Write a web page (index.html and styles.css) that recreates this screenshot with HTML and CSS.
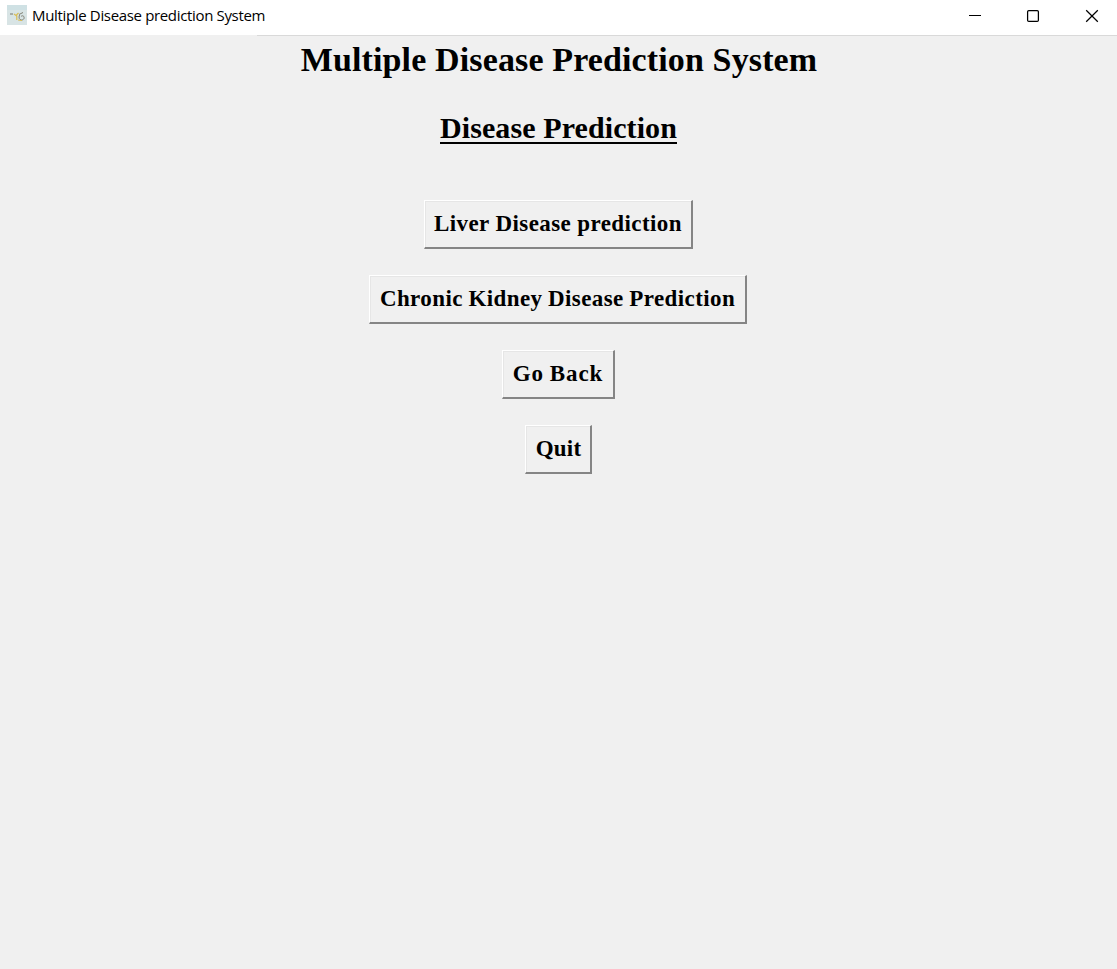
FILE: index.html
```html
<!DOCTYPE html>
<html lang="en">
<head>
<meta charset="utf-8">
<title>Multiple Disease prediction System</title>
<link rel="stylesheet" href="styles.css">
</head>
<body>
<header class="titlebar">
  <svg class="app-icon" width="20" height="20" viewBox="0 0 20 20" fill="none">
    <rect width="20" height="20" fill="#d8e4e5"/>
    <path d="M0 0h20v5H0z" fill="#cfe1e4"/>
    <path d="M3 9h3" stroke="#77766a"/>
    <path d="M7 9l2 1.500L11.500 8M9.800 10.500v4.500" stroke="#d9bd55" stroke-width="1.200"/>
    <path d="M12 9.500l4-2M12.500 10c-2 5 3 6.500 4.500 3.500 .6-2.500-1.500-3.500-3-2" stroke="#77766a" stroke-width=".9"/>
    <path d="M11 15l4 .6" stroke="#d9bd55"/>
  </svg>
  <span class="window-title">Multiple Disease prediction System</span>
  <svg class="controls" width="132" height="14" viewBox="0 0 132 14" fill="none" stroke="#000" stroke-width="1.250">
    <path d="M2 6.500h12" stroke-width="1"/>
    <rect x="60.600" y="1.600" width="10.800" height="10.800" rx="1.200"/>
    <path d="M119.200 1.200l11.600 11.600M130.800 1.200l-11.600 11.600"/>
  </svg>
</header>
<main class="content">
  <h1 class="heading">Multiple Disease Prediction System</h1>
  <h2 class="subheading">Disease Prediction</h2>
  <div class="actions">
    <button class="action liver">Liver Disease prediction</button>
    <button class="action kidney">Chronic Kidney Disease Prediction</button>
    <button class="action back">Go Back</button>
    <button class="action quit">Quit</button>
  </div>
</main>
</body>
</html>
```
FILE: styles.css
```css
* { box-sizing: border-box; }
body {
  margin: 0;
  height: 100vh;
  display: flex;
  flex-direction: column;
  overflow: hidden;
  background: #f0f0f0;
  color: #000;
  font-family: "Liberation Serif", serif;
}
.titlebar {
  height: 36px;
  flex: none;
  display: flex;
  align-items: center;
  padding: 0 18px 6px 7px;
  background:
    linear-gradient(to right, #f0f0f0 257px, #d9d9d9 257px) bottom / 100% 1px no-repeat,
    #fff;
}
.app-icon { flex: none; }
.window-title {
  margin-left: 5px;
  font: 15px/20px "Open Sans", "Noto Sans", sans-serif;
  letter-spacing: -0.34px;
  white-space: nowrap;
}
.controls {
  margin: 2px 0 0 auto;
}
.content {
  display: flex;
  flex-direction: column;
  align-items: center;
  white-space: nowrap;
}
.heading {
  margin: 3px 0 0;
  padding-left: 1px;
  font-size: 34px;
  line-height: 41px;
  letter-spacing: 0.13px;
}
.subheading {
  margin: 34px 0 0;
  height: 30px;
  font-size: 30px;
  line-height: 28px;
  letter-spacing: 0.1px;
  border-bottom: 2px solid #000;
}
.actions {
  margin-top: 56px;
  display: flex;
  flex-direction: column;
  align-items: center;
  gap: 26px;
}
.action {
  height: 49px;
  padding: 0;
  font: bold 23px/40px "Liberation Serif", serif;
  color: #000;
  background: #f0f0f0;
  border: solid;
  border-width: 1px 2px 2px 1px;
  border-color: #fff #858585 #858585 #fff;
  box-shadow: inset 1px 1px #e6e6e6;
}
.liver { width: 269px; letter-spacing: 0.41px; }
.kidney { width: 378px; margin-right: 1px; letter-spacing: 0.4px; word-spacing: -0.5px; }
.back { width: 113px; letter-spacing: 0.95px; word-spacing: -1px; }
.quit { width: 67px; padding-left: 1px; letter-spacing: 0.2px; }
```
